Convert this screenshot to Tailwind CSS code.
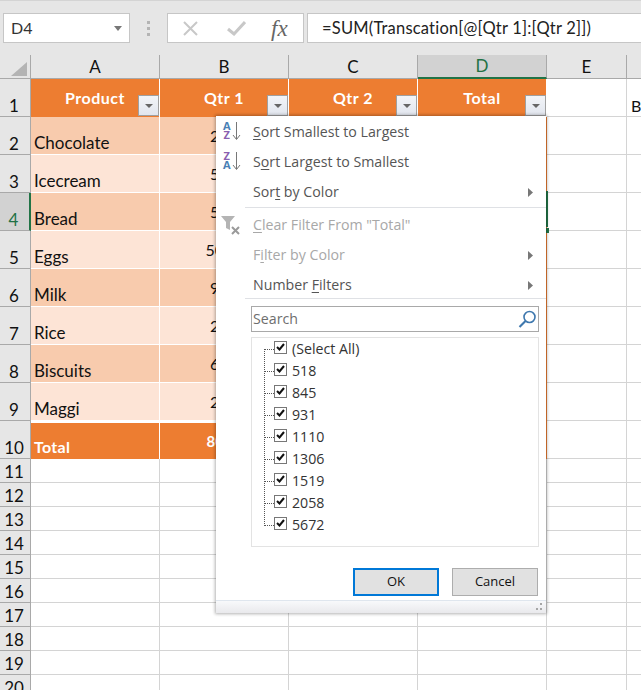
<!DOCTYPE html>
<html lang="en">
<head>
    <meta charset="UTF-8">
    <title>Excel filter menu</title>
    <script src="https://cdn.jsdelivr.net/npm/@tailwindcss/browser@4"></script>
</head>
<body class="bg-white overflow-hidden font-['Lato',sans-serif] text-[#111]">
<div class="relative w-[641px] h-[690px] overflow-hidden">

    <!-- Formula bar -->
    <div class="h-[55px] bg-[#e6e6e6] border-t border-[#d4d4d4] flex items-start pt-[12px] pl-[3px]">
        <div class="w-[127px] h-[30px] bg-white border border-[#c6c6c6] flex items-center justify-between pl-[7px] pr-[7px] text-[16px] text-[#333]">
            <span>D4</span>
            <svg width="8" height="5" viewBox="0 0 8 5"><path d="M0 0h8L4 5z" fill="#777"/></svg>
        </div>
        <div class="w-[3px] ml-[17px] mt-[8px] flex flex-col gap-[3px]">
            <div class="h-[3px] bg-[#b4b4b4]"></div>
            <div class="h-[3px] bg-[#b4b4b4]"></div>
            <div class="h-[3px] bg-[#b4b4b4]"></div>
        </div>
        <div class="w-[137px] h-[30px] ml-[17px] bg-white border border-[#c6c6c6] flex items-center">
            <svg class="ml-[15px]" width="15" height="15" viewBox="0 0 15 15"><path d="M1 1l13 13M14 1L1 14" stroke="#c8c8c8" stroke-width="2" fill="none"/></svg>
            <svg class="ml-[29px]" width="19" height="15" viewBox="0 0 19 15"><path d="M1 8l6 5L18 1" stroke="#c8c8c8" stroke-width="3" fill="none"/></svg>
            <span class="ml-[25px] font-['Liberation_Serif',serif] italic text-[23px] leading-none text-[#666]">fx</span>
        </div>
        <div class="flex-1 h-[30px] ml-[3px] bg-white border border-r-0 border-[#c6c6c6] flex items-center pl-[14px] text-[16.5px] tracking-[0.2px] text-[#222]">=SUM(Transcation[@[Qtr 1]:[Qtr 2]])</div>
    </div>

    <!-- Sheet grid, filled in below -->
    <div id="sheet" class="grid grid-cols-[31px_129px_129px_129px_129px_80px_1fr] grid-rows-[24px_repeat(10,38px)_repeat(10,24px)]"></div>

    <!-- Selected cell border on D4 -->
    <div class="absolute left-[546px] top-[117px] w-[1px] h-[342px] bg-[#ed7d31]"></div>
    <div class="absolute left-[546px] top-[191px] w-[2px] h-[36px] bg-[#217346]"></div>
    <div class="absolute left-[546px] top-[228px] w-[3px] h-[5px] bg-[#217346]"></div>

    <!-- Filter menu -->
    <div class="absolute left-[216px] top-[116px] w-[330px] h-[497px] bg-white shadow-[0_0_3px_1px_rgba(0,0,0,0.3)] flex flex-col font-['Open_Sans',sans-serif] text-[14.2px] text-[#555] underline-offset-2">
        <div class="h-[1px]"></div>
        <div class="h-[30px] flex items-center relative">
            <svg class="ml-[5px]" width="22" height="24" viewBox="0 0 22 24">
                <text x="2" y="9.500" font-family="Open Sans" font-size="11" font-weight="700" fill="#4a7fb5">A</text>
                <text x="2.500" y="19" font-family="Open Sans" font-size="11" font-weight="700" fill="#8a5fb0">Z</text>
                <path d="M15.500 2v17M12 15l3.500 4.500L19 15" stroke="#777" fill="none"/>
            </svg>
            <span class="ml-[10px] -mt-[1px]"><u>S</u>ort Smallest to Largest</span>
        </div>
        <div class="h-[30px] flex items-center">
            <svg class="ml-[5px]" width="22" height="24" viewBox="0 0 22 24">
                <text x="2.500" y="9.500" font-family="Open Sans" font-size="11" font-weight="700" fill="#8a5fb0">Z</text>
                <text x="2" y="19" font-family="Open Sans" font-size="11" font-weight="700" fill="#4a7fb5">A</text>
                <path d="M15.500 2v17M12 15l3.500 4.500L19 15" stroke="#777" fill="none"/>
            </svg>
            <span class="ml-[10px] -mt-[1px]">S<u>o</u>rt Largest to Smallest</span>
        </div>
        <div class="h-[30px] flex items-center justify-between pl-[37px] pr-[13px]">
            <span class="-mt-[1px]">Sor<u>t</u> by Color</span>
            <svg width="5" height="9" viewBox="0 0 5 9"><path d="M0 0l5 4.500L0 9z" fill="#777"/></svg>
        </div>
        <div class="h-[1px] ml-[29px] bg-[#dfe1e5] mb-[2px]"></div>
        <div class="h-[30px] flex items-center text-[#a8a8a8]">
            <svg class="ml-[4px]" width="22" height="22" viewBox="0 0 22 22">
                <path d="M1 2h14l-5 6v8l-4-2V8z" fill="#b4b4b4"/>
                <path d="M12 13l7 7M19 13l-7 7" stroke="#9a9a9a" stroke-width="2" fill="none"/>
            </svg>
            <span class="ml-[11px] -mt-[1px]"><u>C</u>lear Filter From "Total"</span>
        </div>
        <div class="h-[30px] flex items-center justify-between pl-[37px] pr-[13px] text-[#a8a8a8]">
            <span class="-mt-[1px]">F<u>i</u>lter by Color</span>
            <svg width="5" height="9" viewBox="0 0 5 9"><path d="M0 0l5 4.500L0 9z" fill="#777"/></svg>
        </div>
        <div class="h-[28px] flex items-center justify-between pl-[37px] pr-[13px] pt-[2px]">
            <span class="-mt-[1px]">Number <u>F</u>ilters</span>
            <svg width="5" height="9" viewBox="0 0 5 9"><path d="M0 0l5 4.500L0 9z" fill="#777"/></svg>
        </div>
        <div class="h-[1px] ml-[29px] bg-[#dfe1e5]"></div>

        <!-- Search box -->
        <div class="h-[26px] w-[288px] ml-[35px] mt-[7px] border border-[#a9a9a9] flex items-center justify-between pl-[1px] pr-[1px] text-[#6e6e6e]">
            <span>Search</span>
            <svg width="19" height="19" viewBox="0 0 19 19"><circle cx="11.500" cy="7" r="5.500" stroke="#3f78ae" stroke-width="1.600" fill="none"/><path d="M7.500 11l-6 6" stroke="#3f78ae" stroke-width="2.200"/></svg>
        </div>

        <!-- Value list -->
        <div id="values" class="relative h-[210px] w-[288px] ml-[35px] mt-[5px] border border-[#e3e3e3] text-[#333]"></div>

        <!-- Buttons -->
        <div class="flex mt-[21px] ml-[137px] gap-[13px] text-[13px] text-[#111]">
            <div class="w-[86px] h-[28px] bg-[#e1e1e1] border-2 border-[#0078d7] flex items-center justify-center">OK</div>
            <div class="w-[86px] h-[28px] bg-[#e1e1e1] border border-[#adadad] flex items-center justify-center">Cancel</div>
        </div>

        <!-- Resize strip -->
        <div class="relative mt-auto h-[13px] border-t border-[#dfe6ee] bg-gradient-to-b from-[#f8f9fb] to-[#e9e9ec]">
            <svg class="absolute right-[3px] bottom-[2px]" width="8" height="8" viewBox="0 0 8 8"><path d="M5 0h2v2H5zM1 5h2v2H1zM5 5h2v2H5z" fill="#a6a6a6"/></svg>
        </div>
    </div>
</div>

<script>
    const sheet = document.getElementById('sheet');
    const letters = ['A', 'B', 'C', 'D', 'E'];
    let html = '<div class="relative bg-[#e6e6e6] border-r border-b border-[#a9a9a9]"><svg class="absolute left-[11px] top-[7px]" width="16" height="14" viewBox="0 0 16 14"><path d="M16 0v14H0z" fill="#b4b4b4"/></svg></div>';

    letters.forEach(l => {
        if (l === 'D') {
            html += '<div class="bg-[#d2d2d2] border-r border-[#a9a9a9] border-b-2 border-b-[#217346] flex items-center justify-center text-[17px] text-[#1f7145]">D</div>';
        } else {
            html += `<div class="bg-[#e6e6e6] border-r border-b border-[#a9a9a9] flex items-center justify-center text-[17px]">${l}</div>`;
        }
    });
    html += '<div class="bg-[#e6e6e6] border-b border-[#a9a9a9]"></div>';

    const rowHead = n => `<div class="bg-[#e6e6e6] border-r border-b border-[#a9a9a9] flex items-end justify-center pr-[2px] text-[17px] leading-[20px]">${n}</div>`;
    const blank = '<div class="border-r border-b border-[#d4d4d4]"></div>';
    const filterBtn = '<div class="absolute right-0 bottom-[1px] w-[21px] h-[21px] bg-gradient-to-b from-[#f2f4f8] to-[#e2e6ee] border border-[#a0a0a0] flex items-center justify-center"><svg width="8" height="4" viewBox="0 0 8 4"><path d="M0 0h8L4 4z" fill="#666"/></svg></div>';

    // header row of the table
    html += rowHead(1);
    ['Product', 'Qtr 1', 'Qtr 2', 'Total'].forEach(t => {
        html += `<div class="relative bg-[#ed7d31] border-r border-white flex items-center justify-center pb-[1px] font-bold text-[16px] tracking-[0.5px] text-white">${t}${filterBtn}</div>`;
    });
    html += blank;
    html += '<div class="border-b border-[#d4d4d4] flex items-end pl-[4px] text-[16px] leading-[20px]">B</div>';

    const rows = [
        ['Chocolate', '270'], ['Icecream', '500'], ['Bread', '530'], ['Eggs', '5000'],
        ['Milk', '900'], ['Rice', '200'], ['Biscuits', '650'], ['Maggi', '220']
    ];
    rows.forEach((r, i) => {
        const band = i % 2 === 0 ? 'bg-[#f8cbad]' : 'bg-[#fde4d6]';
        if (i === 2) {
            html += '<div class="bg-[#d2d2d2] border-r-2 border-r-[#217346] border-b border-b-[#a9a9a9] flex items-end justify-center pr-[2px] text-[17px] leading-[20px] text-[#1f7145]">4</div>';
        } else {
            html += rowHead(i + 2);
        }
        html += `<div class="${band} border-r border-b border-white flex items-end pl-[3px] pb-[1px] text-[17px] leading-[20px]">${r[0]}</div>`;
        html += `<div class="${band} border-r border-b border-white flex items-center justify-center text-[16px]">${r[1]}</div>`;
        html += `<div class="${band} border-r border-b border-white"></div>`;
        html += `<div class="${band} border-r border-b border-white"></div>`;
        html += blank;
        html += '<div class="border-b border-[#d4d4d4]"></div>';
    });

    // totals row
    html += rowHead(10);
    html += '<div class="bg-[#ed7d31] border-r border-white border-t-2 border-t-white flex items-end pl-[3px] pb-[2px] font-bold text-[16px] tracking-[0.3px] leading-[20px] text-white">Total</div>';
    html += '<div class="bg-[#ed7d31] border-r border-white border-t-2 border-t-white flex items-center justify-center font-bold text-[15px] text-white">8000</div>';
    html += '<div class="bg-[#ed7d31] border-r border-white border-t-2 border-t-white"></div>';
    html += '<div class="bg-[#ed7d31] border-r border-white border-t-2 border-t-white"></div>';
    html += blank;
    html += '<div class="border-b border-[#d4d4d4]"></div>';

    for (let n = 11; n <= 20; n++) {
        html += rowHead(n);
        html += blank + blank + blank + blank + blank;
        html += '<div class="border-b border-[#d4d4d4]"></div>';
    }
    sheet.innerHTML = html;

    // checked values in the filter list
    const values = ['(Select All)', '518', '845', '931', '1110', '1306', '1519', '2058', '5672'];
    let list = '<div class="absolute left-[12px] top-[11px] h-[177px] border-l border-dotted border-[#555]"></div>';
    values.forEach(v => {
        list += `<div class="h-[22px] flex items-center">
            <div class="w-[10px] ml-[12px] border-t border-dotted border-[#555]"></div>
            <div class="relative -top-[2px] w-[13px] h-[13px] bg-white border border-[#777] flex items-center justify-center">
                <svg width="9" height="8" viewBox="0 0 9 8"><path d="M1 4l2.500 2.500L8 1" stroke="#111" stroke-width="2" fill="none"/></svg>
            </div>
            <span class="ml-[5px]">${v}</span>
        </div>`;
    });
    document.getElementById('values').innerHTML = list;
</script>
</body>
</html>
